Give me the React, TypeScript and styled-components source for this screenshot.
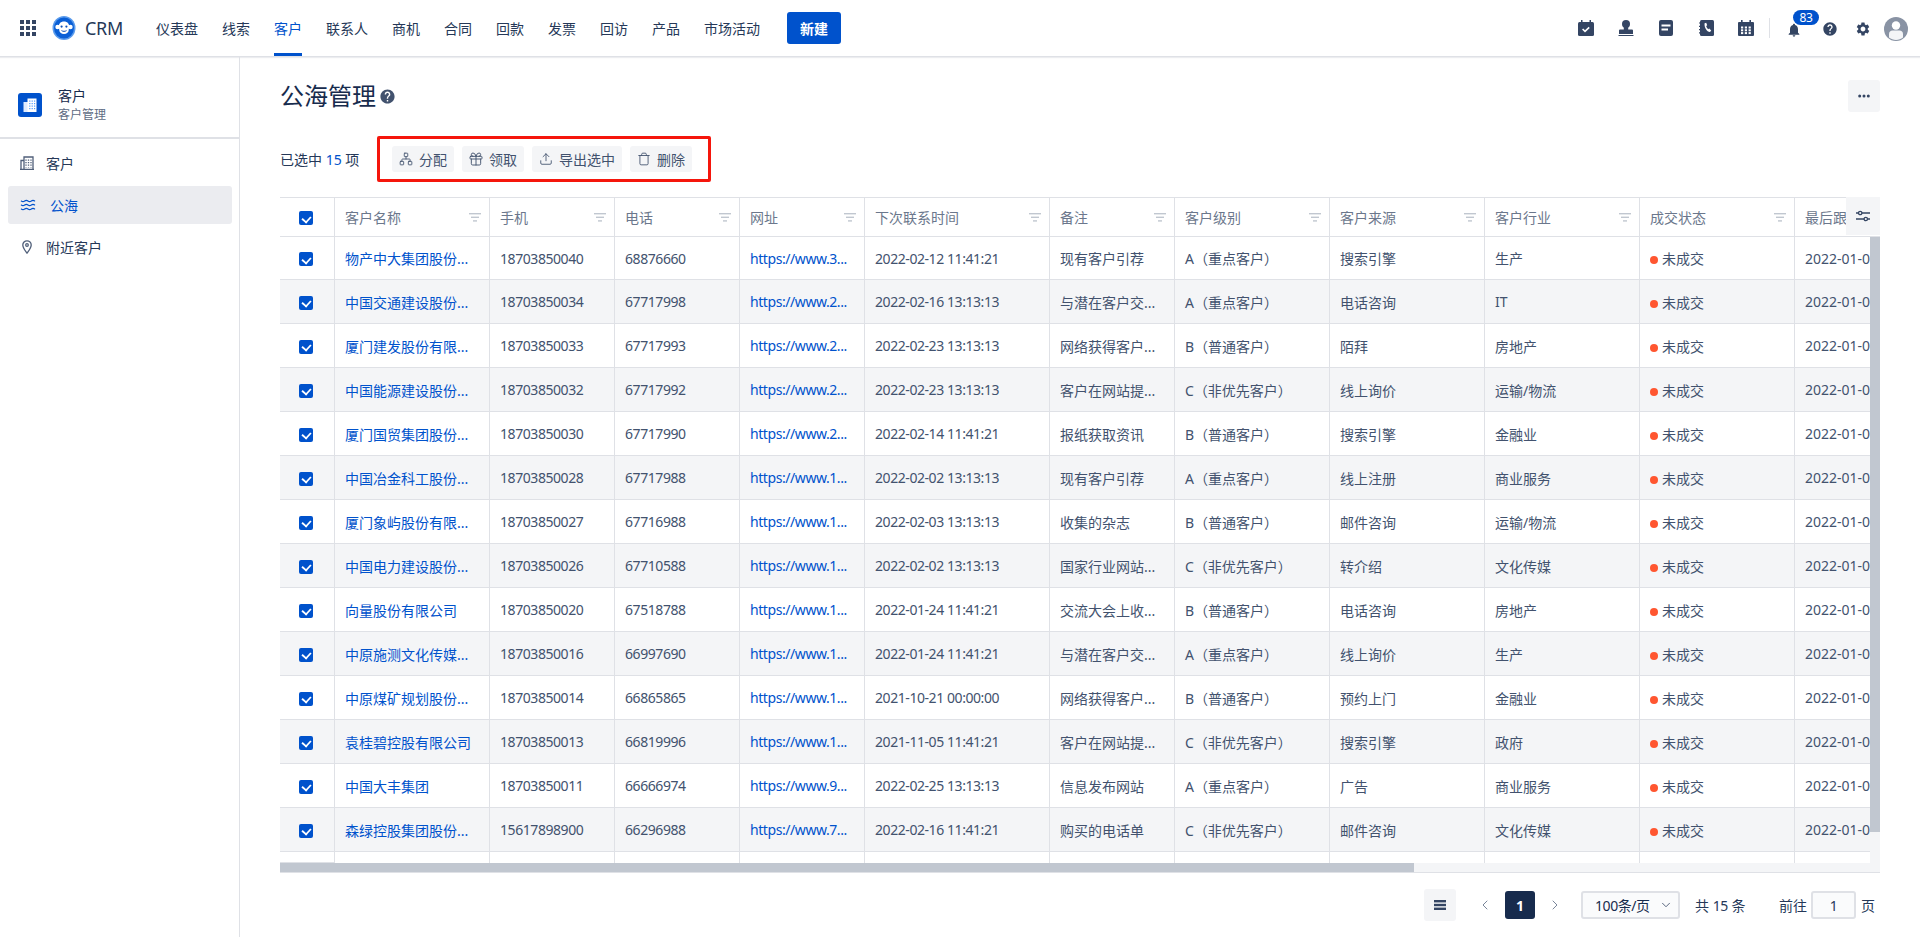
import styled, { createGlobalStyle } from "styled-components";
import { ChevronDown, ChevronLeft, ChevronRight, Gift, Network, Trash, Upload, Waves } from "lucide-react";
import { MdHelp, MdNotifications, MdSettings } from "react-icons/md";

const NAV_ITEMS = ["仪表盘", "线索", "客户", "联系人", "商机", "合同", "回款", "发票", "回访", "产品", "市场活动"];

const COLUMNS = [
  { title: "客户名称", width: 155 },
  { title: "手机", width: 125 },
  { title: "电话", width: 125 },
  { title: "网址", width: 125 },
  { title: "下次联系时间", width: 185 },
  { title: "备注", width: 125 },
  { title: "客户级别", width: 155 },
  { title: "客户来源", width: 155 },
  { title: "客户行业", width: 155 },
  { title: "成交状态", width: 155 },
  { title: "最后跟进时间", width: 185 },
];

const A = "A（重点客户）";
const B = "B（普通客户）";
const C = "C（非优先客户）";

const ROWS = [
  ["物产中大集团股份...", "18703850040", "68876660", "https://www.3...", "2022-02-12 11:41:21", "现有客户引荐", A, "搜索引擎", "生产"],
  ["中国交通建设股份...", "18703850034", "67717998", "https://www.2...", "2022-02-16 13:13:13", "与潜在客户交...", A, "电话咨询", "IT"],
  ["厦门建发股份有限...", "18703850033", "67717993", "https://www.2...", "2022-02-23 13:13:13", "网络获得客户...", B, "陌拜", "房地产"],
  ["中国能源建设股份...", "18703850032", "67717992", "https://www.2...", "2022-02-23 13:13:13", "客户在网站提...", C, "线上询价", "运输/物流"],
  ["厦门国贸集团股份...", "18703850030", "67717990", "https://www.2...", "2022-02-14 11:41:21", "报纸获取资讯", B, "搜索引擎", "金融业"],
  ["中国冶金科工股份...", "18703850028", "67717988", "https://www.1...", "2022-02-02 13:13:13", "现有客户引荐", A, "线上注册", "商业服务"],
  ["厦门象屿股份有限...", "18703850027", "67716988", "https://www.1...", "2022-02-03 13:13:13", "收集的杂志", B, "邮件咨询", "运输/物流"],
  ["中国电力建设股份...", "18703850026", "67710588", "https://www.1...", "2022-02-02 13:13:13", "国家行业网站...", C, "转介绍", "文化传媒"],
  ["向量股份有限公司", "18703850020", "67518788", "https://www.1...", "2022-01-24 11:41:21", "交流大会上收...", B, "电话咨询", "房地产"],
  ["中原施测文化传媒...", "18703850016", "66997690", "https://www.1...", "2022-01-24 11:41:21", "与潜在客户交...", A, "线上询价", "生产"],
  ["中原煤矿规划股份...", "18703850014", "66865865", "https://www.1...", "2021-10-21 00:00:00", "网络获得客户...", B, "预约上门", "金融业"],
  ["袁桂碧控股有限公司", "18703850013", "66819996", "https://www.1...", "2021-11-05 11:41:21", "客户在网站提...", C, "搜索引擎", "政府"],
  ["中国大丰集团", "18703850011", "66666974", "https://www.9...", "2022-02-25 13:13:13", "信息发布网站", A, "广告", "商业服务"],
  ["森绿控股集团股份...", "15617898900", "66296988", "https://www.7...", "2022-02-16 11:41:21", "购买的电话单", C, "邮件咨询", "文化传媒"],
];

const GridIcon = () => (
  <svg width="16" height="16" viewBox="0 0 16 16" fill="#344563">
    {[0, 6, 12].map((y) => [0, 6, 12].map((x) => <rect key={`${x}-${y}`} x={x} y={y} width="4" height="4" />))}
  </svg>
);

// 원숭이 로고
const LogoIcon = () => (
  <svg width="24" height="24" viewBox="0 0 24 24">
    <ellipse cx="12" cy="12" rx="11.5" ry="12" fill="#5a9bec" />
    <ellipse cx="12" cy="12" rx="10" ry="10.5" fill="#0a5fd6" />
    <circle cx="5.6" cy="11" r="2.3" fill="#fff" />
    <circle cx="18.4" cy="11" r="2.3" fill="#fff" />
    <path d="M12 5.5c3.4 0 5.2 2.2 5.2 5 0 1.3-.4 2-.4 3 0 2.8-2 4.5-4.8 4.5s-4.8-1.7-4.8-4.5c0-1-.4-1.7-.4-3 0-2.8 1.8-5 5.2-5z" fill="#fff" />
    <circle cx="9.6" cy="10.6" r="1.1" fill="#0a4fb8" />
    <circle cx="14.4" cy="10.6" r="1.1" fill="#0a4fb8" />
    <path d="M9.5 14.6c1.5 1 3.5 1 5 0" stroke="#0a4fb8" strokeWidth="1" fill="none" />
  </svg>
);

const TaskIcon = () => (
  <svg width="16" height="16" viewBox="0 0 16 16">
    <rect x="0" y="2" width="16" height="14" rx="1.5" fill="#344563" />
    <rect x="3" y="0" width="1.5" height="3" fill="#344563" />
    <rect x="11.5" y="0" width="1.5" height="3" fill="#344563" />
    <path d="M4.6 9l2.4 2.3 4.2-4" stroke="#fff" strokeWidth="1.6" fill="none" />
  </svg>
);

const StampIcon = () => (
  <svg width="16" height="16" viewBox="0 0 16 16" fill="#344563">
    <circle cx="8" cy="4" r="4" />
    <rect x="5.8" y="6" width="4.4" height="4" />
    <path d="M2 9.500h12a1 1 0 0 1 1 1V14H1v-3.500a1 1 0 0 1 1-1z" />
    <rect x="0.500" y="15" width="15" height="1" />
  </svg>
);

const NoteIcon = () => (
  <svg width="14" height="16" viewBox="0 0 14 16">
    <rect width="14" height="16" rx="2" fill="#344563" />
    <rect x="2.5" y="4.5" width="9" height="2" fill="#fff" />
    <rect x="2.5" y="8.5" width="6.5" height="2" fill="#fff" />
  </svg>
);

const PhoneBookIcon = () => (
  <svg width="15" height="16" viewBox="0 0 15 16">
    <rect x="1" width="14" height="16" rx="1.5" fill="#344563" />
    <path d="M0 3h2M0 6.3h2M0 9.6h2M0 12.9h2" stroke="#344563" strokeWidth="1.2" />
    <path d="M5.6 3.2l1.6-.5 1 2.6-1 .8c.3 1.300 1 2.400 2 3.100l1.100-.6 1.900 2-1.200 1.500c-3.200-.4-6-4.700-5.400-8.900z" fill="#fff" />
  </svg>
);

const CalendarIcon = () => (
  <svg width="16" height="16" viewBox="0 0 16 16">
    <rect y="2" width="16" height="14" rx="1" fill="#344563" />
    <rect x="3" width="1.6" height="3.500" fill="#344563" />
    <rect x="11.400" width="1.6" height="3.500" fill="#344563" />
    {[6.5, 9.300, 12.100].map((y) =>
      [3, 6.800, 10.600].map((x) => <rect key={`${x}-${y}`} x={x} y={y} width="2.200" height="2" fill="#fff" />),
    )}
  </svg>
);

const AvatarIcon = () => (
  <svg width="24" height="24" viewBox="0 0 24 24">
    <circle cx="12" cy="12" r="12" fill="#8993a4" />
    <circle cx="12" cy="8.500" r="4.200" fill="#fff" />
    <path d="M5 20.500v-3.500c0-2 1.500-3.500 3.500-3.500h7c2 0 3.500 1.500 3.500 3.500v3.500c-2 1.600-4.300 2.400-7 2.400s-5-.8-7-2.400z" fill="#f4f5f7" />
  </svg>
);

const BuildingFill = () => (
  <svg width="14" height="14" viewBox="0 0 14 14">
    <rect x="0.500" y="4" width="5" height="10" fill="#deebff" />
    <rect x="4.500" y="0.500" width="9" height="13.500" fill="#fff" />
    {[2.500, 5, 7.500, 10].map((y) =>
      [6.200, 8.600, 11].map((x) => <rect key={`${x}-${y}`} x={x} y={y} width="1.200" height="1.200" fill="#4c9aff" />),
    )}
  </svg>
);

const BuildingLine = () => (
  <svg width="14" height="14" viewBox="0 0 14 14" fill="none" stroke="#505f79" strokeWidth="1.300">
    <path d="M1 13.400V4.500h3M4 13.400V1h9v12.400zM0 13.400h14" />
    <path d="M6 3.500v8M8.500 3.500v8M11 3.500v8" strokeDasharray="1.300 1.200" />
  </svg>
);

const PinIcon = () => (
  <svg width="10" height="14" viewBox="0 0 10 14" fill="none" stroke="#505f79" strokeWidth="1.300">
    <path d="M5 13.200C3 10.400.8 7.800.8 5a4.200 4.200 0 0 1 8.400 0c0 2.800-2.200 5.400-4.200 8.200z" />
    <circle cx="5" cy="5" r="1.300" />
  </svg>
);

const FilterIcon = () => (
  <svg width="12" height="9" viewBox="0 0 12 9" fill="#c1c7d0">
    <rect width="12" height="1.400" />
    <rect x="2" y="3.600" width="8" height="1.400" />
    <rect x="4" y="7.200" width="4" height="1.400" />
  </svg>
);

const SlidersIcon = () => (
  <svg width="14" height="12" viewBox="0 0 14 12" fill="none" stroke="#344563" strokeWidth="1.300">
    <path d="M0 3h2.500M6 3h8M0 9h8M11.500 9h2.500" />
    <circle cx="4.200" cy="3" r="1.700" />
    <circle cx="9.800" cy="9" r="1.700" />
  </svg>
);

const BarsIcon = () => (
  <svg width="12" height="10" viewBox="0 0 12 10" fill="#344563">
    <rect width="12" height="2.400" />
    <rect y="3.800" width="12" height="2.400" />
    <rect y="7.600" width="12" height="2.400" />
  </svg>
);

const DotsIcon = () => (
  <svg width="12" height="4" viewBox="0 0 12 4" fill="#344563">
    <circle cx="1.700" cy="2" r="1.500" />
    <circle cx="6" cy="2" r="1.500" />
    <circle cx="10.300" cy="2" r="1.500" />
  </svg>
);

const App = () => {
  return (
    <Page>
      <GlobalStyle />
      <TopBar>
        <GridIcon />
        <LogoSlot>
          <LogoIcon />
        </LogoSlot>
        <Brand>CRM</Brand>
        <Nav>
          {NAV_ITEMS.map((item) => (
            <NavItem key={item} $active={item === "客户"}>
              {item}
            </NavItem>
          ))}
        </Nav>
        <CreateButton>新建</CreateButton>
        <Tools>
          <ToolIcons>
            <ToolSlot><TaskIcon /></ToolSlot>
            <ToolSlot><StampIcon /></ToolSlot>
            <ToolSlot><NoteIcon /></ToolSlot>
            <ToolSlot><PhoneBookIcon /></ToolSlot>
            <ToolSlot><CalendarIcon /></ToolSlot>
          </ToolIcons>
          <ToolDivider />
          <BellSlot>
            <MdNotifications size={20} color="#344563" />
            <Badge>83</Badge>
          </BellSlot>
          <HelpSlot>
            <MdHelp size={20} color="#344563" />
          </HelpSlot>
          <GearSlot>
            <MdSettings size={20} color="#344563" />
          </GearSlot>
          <AvatarSlot>
            <AvatarIcon />
          </AvatarSlot>
        </Tools>
      </TopBar>

      <Body>
        <Sidebar>
          <SideHeader>
            <SideLogo>
              <BuildingFill />
            </SideLogo>
            <div>
              <SideTitle>客户</SideTitle>
              <SideSub>客户管理</SideSub>
            </div>
          </SideHeader>
          <Menu>
            <MenuItem>
              <MenuIcon><BuildingLine /></MenuIcon>
              客户
            </MenuItem>
            <MenuItem $active>
              <MenuIcon $wide><Waves size={16} strokeWidth={1.7} color="#0052cc" /></MenuIcon>
              公海
            </MenuItem>
            <MenuItem>
              <MenuIcon $inset><PinIcon /></MenuIcon>
              附近客户
            </MenuItem>
          </Menu>
        </Sidebar>

        <Main>
          <TitleRow>
            <TitleGroup>
              <PageTitle>公海管理</PageTitle>
              <MdHelp size={17} color="#42526e" />
            </TitleGroup>
            <MoreButton>
              <DotsIcon />
            </MoreButton>
          </TitleRow>

          <SelectionRow>
            <SelectedText>
              已选中 <SelectedCount>15</SelectedCount> 项
            </SelectedText>
            <ActionBox>
              <ActionButton><Network size={14} strokeWidth={1.5} />分配</ActionButton>
              <ActionButton><GiftIcon size={16} strokeWidth={1.4} />领取</ActionButton>
              <ActionButton><Upload size={14} strokeWidth={1.5} />导出选中</ActionButton>
              <ActionButton><Trash size={14} strokeWidth={1.5} />删除</ActionButton>
            </ActionBox>
          </SelectionRow>

          <TableWrap>
            <Table>
              <colgroup>
                <col width={55} />
                {COLUMNS.map((col) => (
                  <col key={col.title} width={col.width} />
                ))}
              </colgroup>
              <thead>
                <tr>
                  <HeadCell $center>
                    <Checkbox />
                  </HeadCell>
                  {COLUMNS.map((col) => (
                    <HeadCell key={col.title}>
                      <HeadInner>
                        {col.title}
                        <FilterIcon />
                      </HeadInner>
                    </HeadCell>
                  ))}
                </tr>
              </thead>
              <tbody>
                {ROWS.map((row, i) => (
                  <BodyRow key={row[1]} $striped={i % 2 === 1}>
                    <Cell $center>
                      <Checkbox />
                    </Cell>
                    <Cell><NameLink>{row[0]}</NameLink></Cell>
                    <Cell><Latin>{row[1]}</Latin></Cell>
                    <Cell><Latin>{row[2]}</Latin></Cell>
                    <Cell><NameLink><Latin>{row[3]}</Latin></NameLink></Cell>
                    <Cell><Latin>{row[4]}</Latin></Cell>
                    <Cell>{row[5]}</Cell>
                    <Cell>{row[6]}</Cell>
                    <Cell>{row[7]}</Cell>
                    <Cell>{row[8]}</Cell>
                    <Cell>
                      <StatusDot />未成交
                    </Cell>
                    <Cell>2022-01-05</Cell>
                  </BodyRow>
                ))}
                <BodyRow>
                  <Cell />
                  {COLUMNS.map((col) => (
                    <Cell key={col.title} />
                  ))}
                </BodyRow>
              </tbody>
            </Table>
            <ColumnSettings>
              <SlidersIcon />
            </ColumnSettings>
            <VTrack>
              <VThumb />
            </VTrack>
            <HTrack>
              <HThumb />
            </HTrack>
          </TableWrap>

          <Pager>
            <PagerMenu>
              <BarsIcon />
            </PagerMenu>
            <PagerArrow>
              <ChevronLeft size={16} strokeWidth={1.5} />
            </PagerArrow>
            <PageNumber>1</PageNumber>
            <PagerArrow $next>
              <ChevronRight size={16} strokeWidth={1.5} />
            </PagerArrow>
            <SizeSelect>
              <Latin>100条/页</Latin>
              <ChevronDown size={14} strokeWidth={1.5} />
            </SizeSelect>
            <Total>共 <Latin>15</Latin> 条</Total>
            <JumpLabel>前往</JumpLabel>
            <JumpInput><Latin>1</Latin></JumpInput>
            <JumpEnd>页</JumpEnd>
          </Pager>
        </Main>
      </Body>
    </Page>
  );
};

export default App;

const GlobalStyle = createGlobalStyle`
  html, body {
    margin: 0;
    padding: 0;
    height: 100%;
    overflow: hidden;
    background: #fff;
  }
  * {
    box-sizing: border-box;
  }
`;

const Page = styled.div`
  width: 1920px;
  height: 937px;
  display: flex;
  flex-direction: column;
  font-family: "Noto Sans", "Noto Sans CJK SC", sans-serif;
  font-size: 14px;
  color: #172b4d;
`;

const TopBar = styled.header`
  height: 57px;
  flex: none;
  display: flex;
  align-items: center;
  padding-left: 20px;
  padding-right: 12px;
  border-bottom: 1px solid #dfe1e6;
  box-shadow: 0 1px 1px rgba(9, 30, 66, 0.08);
`;

const LogoSlot = styled.div`
  display: flex;
  margin-left: 16px;
`;

const Brand = styled.div`
  margin-left: 9px;
  font-size: 18px;
  letter-spacing: -0.3px;
  color: #253858;
`;

const Nav = styled.nav`
  display: flex;
  gap: 24px;
  height: 100%;
  margin-left: 33px;
`;

const NavItem = styled.a<{ $active?: boolean }>`
  display: flex;
  align-items: center;
  height: 100%;
  color: ${(p) => (p.$active ? "#0052cc" : "#253858")};
  border-bottom: 3px solid ${(p) => (p.$active ? "#0052cc" : "transparent")};
  border-top: 3px solid transparent;
  margin-bottom: -1px;
`;

const CreateButton = styled.button`
  width: 54px;
  height: 32px;
  margin-left: 27px;
  border: 0;
  border-radius: 3px;
  background: #0052cc;
  color: #fff;
  font: inherit;
  font-weight: 700;
`;

const Tools = styled.div`
  margin-left: auto;
  display: flex;
  align-items: center;
`;

const ToolIcons = styled.div`
  display: flex;
  gap: 24px;
`;

const ToolSlot = styled.div`
  width: 16px;
  display: flex;
  justify-content: center;
  svg {
    display: block;
  }
`;

const ToolDivider = styled.div`
  width: 1px;
  height: 20px;
  margin: 0 15px;
  background: #dfe1e6;
`;

const BellSlot = styled.div`
  position: relative;
  width: 16px;
  margin-left: 1px;
  height: 20px;
  display: flex;
  justify-content: center;
  margin-top: 3px;
`;

const Badge = styled.span`
  position: absolute;
  left: 7px;
  top: -10px;
  width: 26px;
  height: 15px;
  border-radius: 8px;
  background: #0052cc;
  color: #fff;
  font-size: 12px;
  line-height: 15px;
  text-align: center;
  letter-spacing: -0.3px;
`;

const HelpSlot = styled.div`
  width: 16px;
  margin-left: 20px;
  display: flex;
  justify-content: center;
  margin-top: 2px;
`;

const GearSlot = styled(HelpSlot)`
  margin-left: 17px;
`;

const AvatarSlot = styled.div`
  display: flex;
  margin-left: 13px;
  margin-top: 2px;
`;

const Body = styled.div`
  flex: 1;
  display: flex;
  min-height: 0;
`;

const Sidebar = styled.aside`
  width: 240px;
  flex: none;
  border-right: 1px solid #dfe1e6;
`;

const SideHeader = styled.div`
  height: 82px;
  display: flex;
  align-items: center;
  gap: 16px;
  padding-left: 18px;
  padding-top: 28px;
  padding-bottom: 12px;
  border-bottom: 2px solid #dfe1e6;
`;

const SideLogo = styled.div`
  width: 24px;
  height: 24px;
  display: flex;
  align-items: center;
  justify-content: center;
  border-radius: 3px;
  background: #0052cc;
`;

const SideTitle = styled.div`
  line-height: 20px;
  color: #172b4d;
`;

const SideSub = styled.div`
  font-size: 12px;
  line-height: 18px;
  color: #5e6c84;
`;

const Menu = styled.div`
  display: flex;
  flex-direction: column;
  gap: 4px;
  padding: 5px 7px 0 8px;
`;

const MenuItem = styled.a<{ $active?: boolean }>`
  height: 38px;
  display: flex;
  align-items: center;
  padding-left: 12px;
  border-radius: 3px;
  background: ${(p) => (p.$active ? "#ebecf0" : "transparent")};
  color: ${(p) => (p.$active ? "#0052cc" : "#253858")};
`;

const MenuIcon = styled.span<{ $wide?: boolean; $inset?: boolean }>`
  width: ${(p) => (p.$wide ? "30px" : "26px")};
  padding-left: ${(p) => (p.$inset ? "2px" : "0")};
  display: flex;
  align-items: center;
`;

const Main = styled.main`
  flex: 1;
  min-width: 0;
  padding: 23px 40px 0;
`;

const TitleRow = styled.div`
  height: 32px;
  display: flex;
  align-items: center;
  justify-content: space-between;
`;

const TitleGroup = styled.div`
  display: flex;
  align-items: center;
  gap: 3px;
`;

const PageTitle = styled.h1`
  margin: 0;
  font-size: 24px;
  font-weight: 400;
  line-height: 32px;
  color: #172b4d;
`;

const MoreButton = styled.button`
  width: 32px;
  height: 32px;
  display: flex;
  align-items: center;
  justify-content: center;
  padding: 0;
  border: 0;
  border-radius: 3px;
  background: #f4f5f7;
`;

const SelectionRow = styled.div`
  height: 46px;
  margin-top: 24px;
  display: flex;
  align-items: center;
`;

const SelectedText = styled.div`
  width: 97px;
  color: #253858;
  white-space: nowrap;
`;

const SelectedCount = styled.span`
  color: #0052cc;
`;

const ActionBox = styled.div`
  height: 46px;
  display: flex;
  align-items: center;
  gap: 8px;
  padding: 0 16px 0 12px;
  border: 3px solid #f5160c;
  border-radius: 2px;
`;

const ActionButton = styled.button`
  height: 26px;
  display: flex;
  align-items: center;
  gap: 6px;
  padding: 0 7px;
  border: 0;
  border-radius: 3px;
  background: #f4f5f7;
  color: #42526e;
  font: inherit;
  white-space: nowrap;
`;

const GiftIcon = styled(Gift)`
  margin: 0 -1px;
`;

const TableWrap = styled.div`
  position: relative;
  height: 676px;
  margin-top: 15px;
  overflow: hidden;
`;

const Table = styled.table`
  table-layout: fixed;
  width: 1635px;
  border-collapse: separate;
  border-spacing: 0;
`;

const HeadCell = styled.th<{ $center?: boolean }>`
  height: 40px;
  padding: ${(p) => (p.$center ? "0 12px 0 10px" : "0 8px 0 10px")};
  border-top: 1px solid #dfe1e6;
  border-right: 1px solid #dfe1e6;
  border-bottom: 1px solid #dfe1e6;
  font-weight: 400;
  text-align: ${(p) => (p.$center ? "center" : "left")};
  color: #6b778c;
  background: #fff;
`;

const HeadInner = styled.div`
  display: flex;
  align-items: center;
  justify-content: space-between;
  white-space: nowrap;
`;

const BodyRow = styled.tr<{ $striped?: boolean }>`
  background: ${(p) => (p.$striped ? "#f4f5f7" : "#fff")};
  &:first-child td {
    height: 43px;
  }
`;

const Cell = styled.td<{ $center?: boolean }>`
  height: 44px;
  padding: ${(p) => (p.$center ? "0 12px 0 10px" : "0 10px")};
  border-right: 1px solid #dfe1e6;
  border-bottom: 1px solid #dfe1e6;
  text-align: ${(p) => (p.$center ? "center" : "left")};
  color: #42526e;
  white-space: nowrap;
  overflow: hidden;
`;

const Latin = styled.span`
  letter-spacing: -0.43px;
`;

const NameLink = styled.a`
  color: #0052cc;
`;

const Checkbox = styled.span`
  display: block;
  position: relative;
  top: 1px;
  width: 14px;
  height: 14px;
  margin: 0 auto;
  border-radius: 2px;
  background: #0052cc;
  &::after {
    content: "";
    position: absolute;
    left: 4px;
    top: 2.500px;
    width: 5px;
    height: 7px;
    transform: rotate(42deg) scale(0.9);
    border-right: 2px solid #fff;
    border-bottom: 2px solid #fff;
  }
`;

const StatusDot = styled.span`
  display: inline-block;
  width: 8px;
  height: 8px;
  margin-right: 4px;
  border-radius: 50%;
  background: #ff5630;
`;

const ColumnSettings = styled.div`
  position: absolute;
  top: 0;
  right: 0;
  width: 34px;
  height: 38px;
  display: flex;
  align-items: center;
  padding-left: 10px;
  background: #f4f5f7;
`;

const VTrack = styled.div`
  position: absolute;
  top: 40px;
  right: 0;
  bottom: 0;
  width: 10px;
  background: #f4f5f7;
`;

const VThumb = styled.div`
  height: 595px;
  background: #c1c7d0;
`;

const HTrack = styled.div`
  position: absolute;
  left: 0;
  right: 0;
  bottom: 0;
  height: 10px;
  background: #f4f5f7;
  border-bottom: 1px solid #dfe1e6;
  &::before {
    content: "";
    position: absolute;
    left: 0;
    top: -1px;
    width: 55px;
    height: 1px;
    background: #dfe1e6;
  }
`;

const HThumb = styled.div`
  width: 1134px;
  height: 9px;
  background: #c1c7d0;
`;

const Pager = styled.div`
  height: 32px;
  margin-top: 16px;
  padding-right: 5px;
  display: flex;
  align-items: center;
  justify-content: flex-end;
  color: #253858;
`;

const PagerMenu = styled.button`
  width: 32px;
  height: 32px;
  display: flex;
  align-items: center;
  justify-content: center;
  padding: 0;
  border: 0;
  border-radius: 3px;
  background: #f4f5f7;
`;

const PagerArrow = styled.span<{ $next?: boolean }>`
  width: 28px;
  display: flex;
  justify-content: center;
  margin-left: ${(p) => (p.$next ? "6px" : "15px")};
  margin-right: ${(p) => (p.$next ? "12px" : "6px")};
  color: #7a869a;
`;

const PageNumber = styled.span`
  width: 30px;
  height: 28px;
  display: flex;
  align-items: center;
  justify-content: center;
  border-radius: 3px;
  background: #172b4d;
  color: #fff;
  font-weight: 700;
`;

const SizeSelect = styled.div`
  width: 99px;
  height: 28px;
  display: flex;
  align-items: center;
  justify-content: space-between;
  padding: 0 5px 0 12px;
  border: 2px solid #dfe1e6;
  border-radius: 3px;
  background: #fafbfc;
  color: #172b4d;
  white-space: nowrap;
  svg {
    color: #42526e;
  }
`;

const Total = styled.span`
  margin-left: 15px;
  width: 65px;
  white-space: nowrap;
`;

const JumpLabel = styled.span`
  margin-left: 19px;
  width: 28px;
  white-space: nowrap;
`;

const JumpInput = styled.div`
  width: 45px;
  height: 28px;
  margin: 0 5px;
  margin-left: 4px;
  display: flex;
  align-items: center;
  justify-content: center;
  border: 2px solid #dfe1e6;
  border-radius: 3px;
  background: #fafbfc;
`;

const JumpEnd = styled.span`
  white-space: nowrap;
`;
